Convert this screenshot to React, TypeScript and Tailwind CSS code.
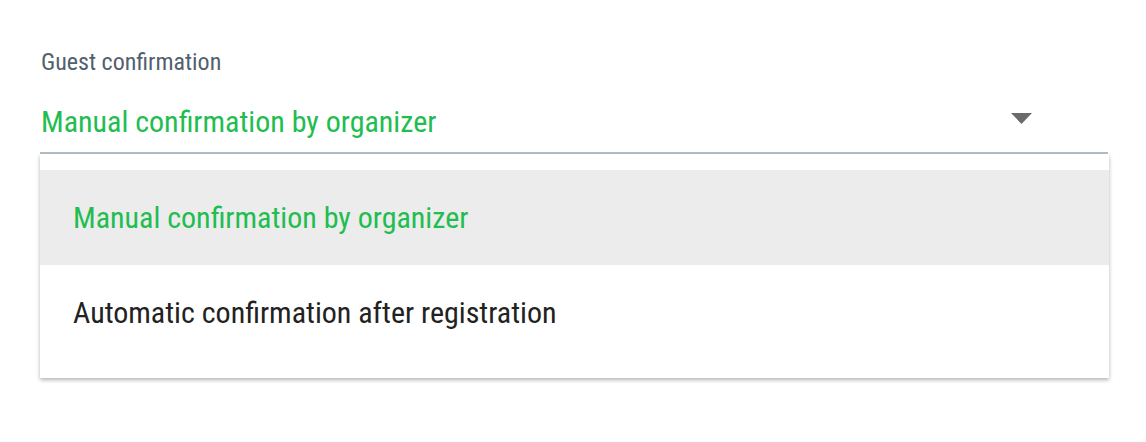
import { useState } from "react";

const options = [
  "Manual confirmation by organizer",
  "Automatic confirmation after registration",
];

export default function App() {
  const [selected, setSelected] = useState(0);

  return (
    <div className="min-h-[442px] w-full bg-white font-['Roboto',sans-serif] font-[380] [font-stretch:75%]">
      <div className="pl-10 pr-[38px] pt-[46px]">
        <p className="pl-px text-[24px] leading-[32px] text-[#52606d]">Guest confirmation</p>
        <div className="flex h-[76px] items-center justify-between border-b-2 border-[#b3bfc7] pl-px pr-[76px] pt-[12px]">
          <span className="text-[30px] text-[#21bd50]">{options[selected]}</span>
          <svg width="21" height="11" viewBox="0 0 21 11" className="mt-[-6px]">
            <path d="M0 0h21L10.5 11z" fill="#6b6b6b" />
          </svg>
        </div>
        <ul className="mr-[-1px] bg-white pb-[18px] pt-[16px] shadow-[0_2px_4px_rgba(0,0,0,0.3)]">
          {options.map((opt, i) => (
            <li
              key={opt}
              onClick={() => setSelected(i)}
              className={
                i === selected
                  ? "flex h-[95px] items-center bg-[#ececec] pl-[33px] text-[30px] text-[#21bd50]"
                  : "flex h-[95px] items-center pl-[33px] text-[30px] text-[#222]"
              }
            >
              {opt}
            </li>
          ))}
        </ul>
      </div>
    </div>
  );
}
